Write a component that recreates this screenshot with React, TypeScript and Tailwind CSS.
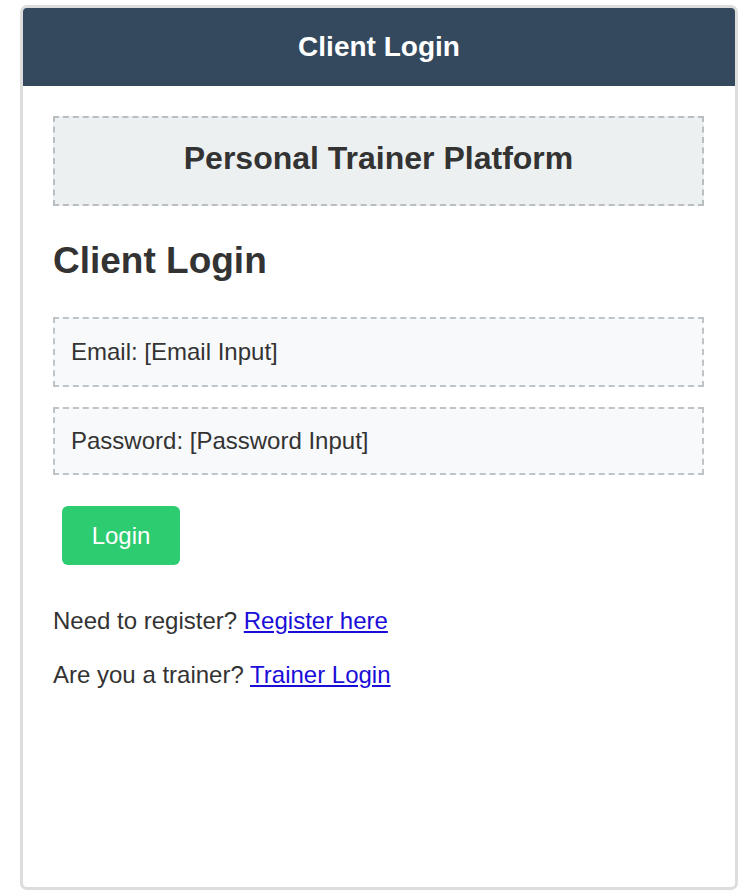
export default function App() {
  return (
    <div className="w-[747px] h-[896px] bg-white pt-[5px] pl-[20px]" style={{ fontFamily: '"Liberation Sans", Arial, sans-serif' }}>
      <div className="w-[718px] h-[885px] border-[3px] border-[#dddddd] rounded-[7px] overflow-hidden flex flex-col">
        <div className="h-[78px] shrink-0 bg-[#34495e] flex items-center justify-center text-white font-bold text-[28px]">
          Client Login
        </div>
        <div className="pl-[30px] pr-[31px] pt-[30px] text-[#333333]">
          <div className="h-[90px] pb-[7px] border-2 border-dashed border-[#b9bec2] bg-[#ecf0f1] flex items-center justify-center">
            <h1 className="text-[32px] font-bold">Personal Trainer Platform</h1>
          </div>
          <h2 className="mt-[35px] text-[37px] leading-[40px] font-bold">Client Login</h2>
          <div className="mt-[36px] h-[70px] border-2 border-dashed border-[#bfc4c8] bg-[#f8f9fa] flex items-center px-[16px] text-[24px]">
            Email: [Email Input]
          </div>
          <div className="mt-[20px] h-[68px] border-2 border-dashed border-[#bfc4c8] bg-[#f8f9fa] flex items-center px-[16px] text-[24px]">
            Password: [Password Input]
          </div>
          <button className="mt-[31px] ml-[9px] w-[118px] h-[59px] rounded-[6px] bg-[#2ecc71] text-white text-[24px]">
            Login
          </button>
          <p className="mt-[41px] text-[24px] leading-[30px]">
            Need to register? <a href="#" className="text-[#1a0dd8] underline">Register here</a>
          </p>
          <p className="mt-[24px] text-[24px] leading-[30px]">
            Are you a trainer? <a href="#" className="text-[#1a0dd8] underline">Trainer Login</a>
          </p>
        </div>
      </div>
    </div>
  );
}
